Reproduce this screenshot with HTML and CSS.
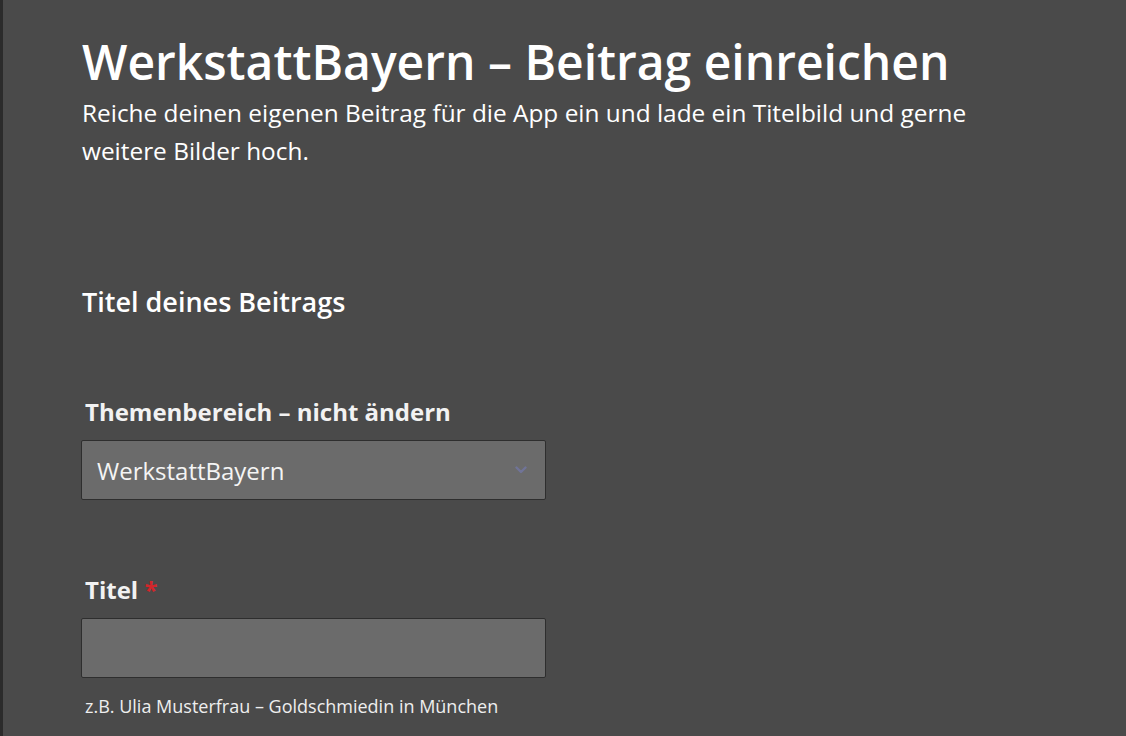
FILE: index.html
```html
<!DOCTYPE html>
<html lang="de">
<head>
<meta charset="utf-8">
<title>WerkstattBayern – Beitrag einreichen</title>
<link rel="stylesheet" href="styles.css">
</head>
<body>
<div class="page">
  <main class="content">
    <header class="intro">
      <h1 class="title">WerkstattBayern – Beitrag einreichen</h1>
      <p class="lead">Reiche deinen eigenen Beitrag für die App ein und lade ein Titelbild und gerne weitere Bilder hoch.</p>
    </header>
    <h2 class="section-title">Titel deines Beitrags</h2>
    <div class="field field-first">
      <label class="label">Themenbereich – nicht ändern</label>
      <div class="select">
        <span class="select-value">WerkstattBayern</span>
        <svg class="chevron" width="12" height="8" viewBox="0 0 12 8"><path d="M1.5 1.5 L6 6 L10.5 1.5" fill="none" stroke="#7479b0" stroke-width="2.4" stroke-linecap="round" stroke-linejoin="round"/></svg>
      </div>
    </div>
    <div class="field field-second">
      <label class="label">Titel <span class="req">*</span></label>
      <div class="input"></div>
      <p class="hint">z.B. Ulia Musterfrau – Goldschmiedin in München</p>
    </div>
  </main>
</div>
</body>
</html>
```
FILE: styles.css
```css
html, body {
  margin: 0;
  padding: 0;
  background: #4a4a4a;
}
body {
  font-family: "Open Sans", "Noto Sans", sans-serif;
  color: #ffffff;
}
.page {
  min-height: 736px;
  border-left: 3px solid #2b2b2b;
  box-sizing: border-box;
}
.content {
  padding: 30px 0 0 78px;
}
.intro, .section-title {
  padding-left: 1px;
}
.title {
  margin: 0;
  font-size: 48px;
  font-weight: 600;
  line-height: 64px;
}
.lead {
  margin: 0;
  font-size: 24.4px;
  line-height: 38px;
  max-width: 910px;
}
.section-title {
  margin: 114px 0 0;
  font-size: 27px;
  font-weight: 600;
  line-height: 36px;
}
.field-first {
  margin-top: 77px;
}
.field-second {
  margin-top: 75px;
}
.label {
  display: block;
  margin: 0 0 13px 4px;
  font-size: 24px;
  font-weight: 700;
  line-height: 30px;
  color: #f2f2f2;
}
.req {
  color: #d2262b;
}
.select, .input {
  width: 465px;
  height: 60px;
  box-sizing: border-box;
  background: #6b6b6b;
  border: 1px solid #2e2e2e;
  border-radius: 2px;
}
.select {
  display: flex;
  align-items: center;
  justify-content: space-between;
  padding: 0 18px 0 15px;
}
.select-value {
  font-size: 24px;
  color: #f4f4f4;
}
.chevron {
  opacity: 0.65;
}
.hint {
  margin: 16px 0 0 4px;
  font-size: 18px;
  line-height: 24px;
  color: #eeeeee;
}
```
